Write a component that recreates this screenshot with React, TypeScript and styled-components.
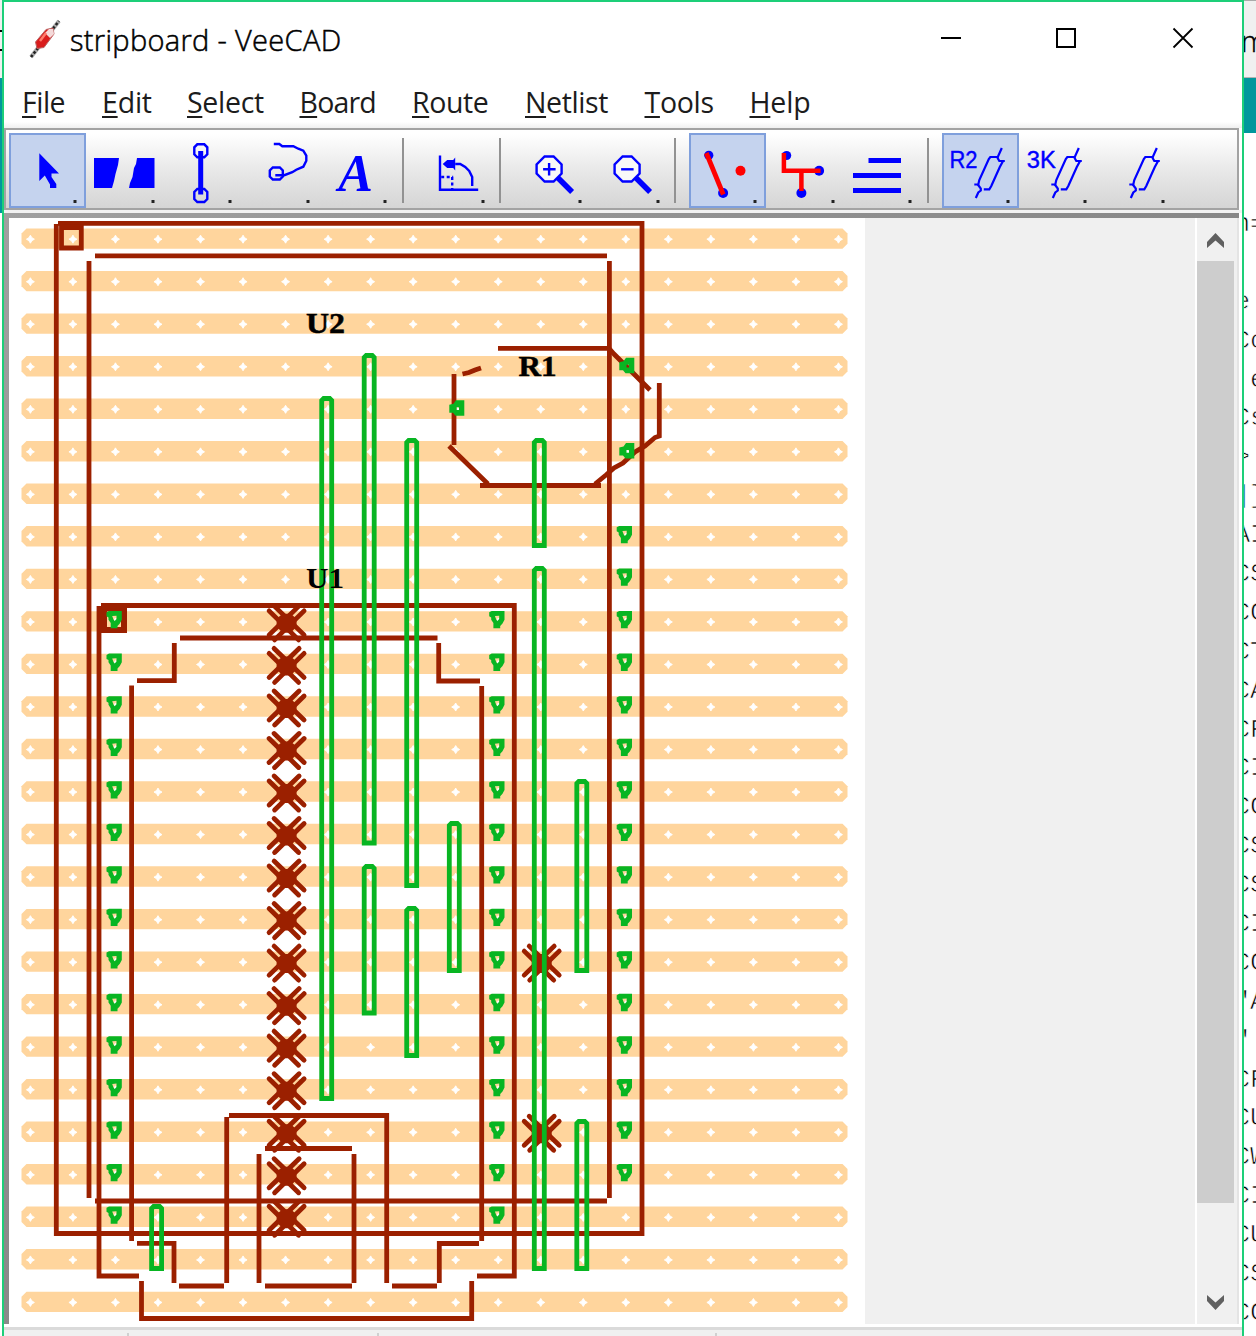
import React from 'react';
import styled, { createGlobalStyle } from 'styled-components';

const BROWN = '#9b2000';
const GREEN = '#08b522';
const PEACH = '#ffd59d';
const BLUE = '#0000ff';
const RED = '#ff0000';

const Global = createGlobalStyle`
  * { box-sizing: border-box; }
  body { margin: 0; background: #fff; }
`;

const Desktop = styled.div`
  display: flex;
  width: 1256px;
  height: 1336px;
  overflow: hidden;
  background: #fff;
`;

const LeftSliver = styled.div`
  display: flex;
  flex-direction: column;
  width: 2px;
  height: 1336px;
  overflow: hidden;
`;

const Block = styled.div<{ $h: number; $bg: string }>`
  flex: none;
  height: ${(p) => p.$h}px;
  background: ${(p) => p.$bg};
`;

const RightSliver = styled.div`
  display: flex;
  flex-direction: column;
  width: 12px;
  height: 1336px;
  overflow: hidden;
`;

const BehindTitle = styled.div`
  flex: none;
  height: 78px;
  border-top: 1px solid #aaa;
  border-bottom: 1px solid #b4b4b4;
  background: #f0f0f0;
  font: 300 29px/79px 'Open Sans', sans-serif;
  text-indent: -3px;
  color: #000;
  -webkit-text-stroke: 0.4px #000;
`;

const CodeLine = styled.div`
  flex: none;
  height: 38.9px;
  margin-left: -9.5px;
  font: 26px/38.9px 'Liberation Mono', monospace;
  white-space: pre;
  color: #000;
  -webkit-text-stroke: 0.7px #fff;
`;

const Window = styled.div`
  display: flex;
  flex-direction: column;
  flex: none;
  width: 1242px;
  height: 1336px;
  border: 2px solid #1dcf79;
  border-bottom: 0;
  background: #fff;
`;

const TitleBar = styled.div`
  display: flex;
  align-items: flex-start;
  flex: none;
  height: 78px;
  padding-left: 24px;
`;

const Title = styled.div`
  flex: 1;
  padding: 18px 0 0 7px;
  font: 300 29px/40px 'Open Sans', sans-serif;
  letter-spacing: 0.32px;
  color: #000;
  -webkit-text-stroke: 0.5px #000;
`;

const CaptionButtons = styled.div`
  display: flex;
  padding-top: 24px;
  gap: 92px;
  margin-right: 47px;
`;

const MenuBar = styled.div`
  display: flex;
  flex: none;
  height: 48px;
  padding-left: 18px;
  background: linear-gradient(#fff 42px, #f0f0f0);
`;

const MenuItem = styled.div<{ $w: number; $sp: number }>`
  flex: none;
  width: ${(p) => p.$w}px;
  font: 400 28.5px/45px 'Open Sans', sans-serif;
  letter-spacing: ${(p) => p.$sp}px;
  color: #1c1c1c;
  white-space: nowrap;
`;

const Mnemonic = styled.span`
  text-decoration: underline;
  text-decoration-thickness: 2px;
  text-underline-offset: 3px;
  text-decoration-skip-ink: none;
`;

const ToolBar = styled.div`
  display: flex;
  flex: none;
  height: 82px;
  margin-right: 3px;
  padding: 3px 0 0 3px;
  border: 2px solid #a3a3a3;
  background: linear-gradient(#fff 5%, #e9e9e9 50%, #d5d5d5);
`;

const ToolButton = styled.div<{ $on?: boolean }>`
  flex: none;
  width: 77.6px;
  height: 76px;
  & > svg {
    display: block;
    width: 77px;
    height: 75px;
    background: ${(p) => (p.$on ? '#c5d3ee' : 'transparent')};
    box-shadow: ${(p) => (p.$on ? 'inset 0 0 0 2px #7f9fdc' : 'none')};
  }
`;

const Separator = styled.div`
  flex: none;
  width: 2px;
  height: 65px;
  margin: 5px 13px 0 4.8px;
  background: #929292;
`;

const Gutter = styled.div`
  flex: none;
  height: 3px;
  background: #f2f2f2;
`;

const Work = styled.div`
  display: flex;
  flex: none;
  height: 1111px;
  margin-right: 3px;
  border-left: 5px solid #808080;
  border-top: 5px solid #808080;
  background: #f0f0f0;
  border-image: linear-gradient(135deg, #a0a0a0, #707070) 5;
  border-right: 0;
  border-bottom: 0;
`;

const Board = styled.svg`
  flex: none;
  width: 856px;
  height: 1106px;
  background: #fff;
`;

const Blank = styled.div`
  flex: 1;
  background: #f0f0f0;
  border-right: 2px solid #fff;
`;

const ScrollBar = styled.div`
  display: flex;
  flex-direction: column;
  align-items: center;
  flex: none;
  width: 42px;
  padding-right: 3px;
  background: #f0f0f0;
  border-right: 2px solid #e4e4e4;
`;

const Thumb = styled.div`
  flex: none;
  width: 37px;
  height: 942px;
  background: #cdcdcd;
`;

const ArrowBox = styled.svg`
  flex: none;
  width: 37px;
  height: 43px;
`;

const ArrowSpace = styled.div`
  flex: 1;
`;

const StatusBar = styled.div`
  display: flex;
  flex: 1;
  margin-top: 3px;
  border-top: 3px solid #dadada;
  background: #f0f0f0;
`;

const StatusCell = styled.div<{ $w: number }>`
  width: ${(p) => p.$w}px;
  margin-top: 3px;
  border-right: 2px solid #d0d0d0;
`;

const code = [
  'n=', '', 'e ', 'Cc', ' e', 'Cs', '> ', ']}', 'AI', 'CS', 'CC', 'CT', 'CA', 'CF', 'CI',
  'CC', 'CS', 'CS', 'CI', 'CC', '"A', '" ', 'CF', 'CU', 'CW', 'CI', 'CU', 'CS', 'CC',
];

const menus: [string, number, number][] = [
  ['File', 80, -0.5],
  ['Edit', 85, -0.2],
  ['Select', 112.5, -0.3],
  ['Board', 112.5, -0.8],
  ['Route', 113, -0.4],
  ['Netlist', 119.5, -0.4],
  ['Tools', 105, -0.3],
  ['Help', 80, -0.2],
];

function Tool({ x, on, children }: { x: number; on?: boolean; children: React.ReactNode }) {
  return (
    <ToolButton $on={on}>
      <svg viewBox={`${x} 133 77 75`} fill="none" stroke={BLUE} strokeWidth={2.4}>
        {children}
        <rect x={x + 64.5} y={200} width={3} height={3} fill="#222" stroke="none" />
      </svg>
    </ToolButton>
  );
}

const oct = (x: number, y: number, w: number, h: number, c: number) =>
  `M${x + c} ${y}h${w - 2 * c}l${c} ${c}v${h - 2 * c}l${-c} ${c}h${2 * c - w}l${-c} ${-c}v${2 * c - h}z`;

function Magnifier({ x, plus }: { x: number; plus?: boolean }) {
  return (
    <g>
      <path d={oct(x - 12.5, 156.5, 25, 25, 8)} fill="#f8f8f8" />
      <path d={`M${x - 6} 169.3h12.5${plus ? `M${x} 163v12.5` : ''}`} />
      <path d={`M${x + 9} 178l14 14`} strokeWidth={5.5} />
    </g>
  );
}

function Resistor({ x }: { x: number }) {
  return (
    <g transform={`translate(${x} 0)`} strokeWidth={2.2}>
      <path d="M62 148L58 157H50.5L49 159L39.5 180L38.5 184.5H34.5" />
      <path d="M57 156.5L59.5 161H65M63 161.5L60 167L51.5 186L49.5 189.3H44" />
      <path d="M38 184.5L41 188.5V190.5L38.500 192.500L36 198" />
    </g>
  );
}

const PITCH = 42.53;
const rowY = (r: number) => 238.6 + r * PITCH;
const colX = (c: number) => 30.4 + c * PITCH;
const range = (a: number, b: number) => Array.from({ length: b - a + 1 }, (_, i) => a + i);

const links: [number, number, number][] = [
  [326.7, 396, 1101], [369.2, 353, 845.5], [369.2, 864, 1015.5], [411.7, 438, 888],
  [411.7, 906, 1058], [454.3, 821, 973], [539.3, 438, 548], [539.3, 566, 1271],
  [581.8, 779, 973], [581.8, 1119, 1271], [156.6, 1204, 1271],
];

const pins: [number, number][] = [
  ...range(9, 23).map((r): [number, number] => [114.5, r]),
  ...range(9, 23).map((r): [number, number] => [497.2, r]),
  ...range(7, 22).map((r): [number, number] => [624.7, r]),
];

const cuts: [number, number][] = [
  ...range(9, 23).map((r): [number, number] => [286.6, r]),
  [541.7, 17],
  [541.7, 21],
];

const outlines = [
  'M58 223.3H642V1233.5H56.3V224',
  'M95 255.8H607M609.4 261V1198M89 261V1198M95 1201H607',
  'M101 605.5H514.3V1276H477M99 606V1276H139M141.5 1281V1318.5H471.7V1281',
  'M131.6 685.5V1241M137 680.7H174.3V643M180 638H437.5M438.7 643V681H480M481.7 686V1241',
  'M137 1243.3H174V1283M179 1286H224M226.7 1283V1117M229 1115.5H386.7V1283M392 1286H437M439.3 1283V1243.5H479',
  'M259 1283V1154M265 1148.5H352M354 1154V1283M265 1286H352',
  'M498 348.3H609L614 354L650 390M659.3 383V436L655 437.5L645 446L635 452L623 463L614 468L606 475L595 484',
  'M480 485.5H601M488 484L449 446M454 445V374M462.5 374L469 372.5L475 370L481 368',
];

const octHead = (x: number, top: number, bottom: number) =>
  `M${x - 5} ${bottom - 2.5}V${top + 4.5}l2 -2h6l2 2V${bottom - 2.5}z`;

function Drawing() {
  return (
    <Board viewBox="9 218 856 1106">
      {range(0, 25).map((r) => (
        <path key={r} fill={PEACH} d={oct(21.5, rowY(r) - 10.2, 826, 20.4, 5)} />
      ))}
      <g fill="#fff">
        {range(0, 25).flatMap((r) =>
          range(0, 19).map((c) => (
            <path
              key={`${r}-${c}`}
              d={`M${colX(c) - 4} ${rowY(r) + 0.6}l2.5 -1.5 1.5 -2.5 1.5 2.5 2.5 1.5 -2.5 1.5 -1.5 2.5 -1.5 -2.5z`}
              stroke="#fff"
              strokeWidth={0.9}
            />
          )),
        )}
      </g>
      <g fontFamily="'Liberation Serif', serif" fontWeight="700" fontSize="29" fill="#000" stroke="#000" strokeWidth="0.5">
        <text x="306" y="333" textLength="39" lengthAdjust="spacingAndGlyphs">U2</text>
        <text x="518.5" y="375.5" textLength="38" lengthAdjust="spacingAndGlyphs">R1</text>
      </g>
      <g fill="none" stroke={BROWN} strokeWidth={4.8}>
        {outlines.map((d) => (
          <path key={d} d={d} />
        ))}
        <path d="M61.5 227.5H81.3V248H61.5z" />
        <path d="M62 227H81" />
        <path d="M104 608.5H124V630H104z" strokeWidth={6} />
      </g>
      <g stroke={BROWN} strokeWidth={4.8} strokeLinecap="round">
        {cuts.map(([x, r]) => (
          <g key={`${x}-${r}`} transform={`translate(${x} ${rowY(r) + 1.5})`}>
            <path d="M-17.5 -12L12 17M-12.5 -17L17.5 12M17.5 -12L-12 17M12.5 -17L-17.5 12" />
            <path d="M-10 -4L-4 -9H4L10 -4V4L4 10H-4L-10 4Z" fill={BROWN} stroke="none" />
          </g>
        ))}
      </g>
      <g fill="none" stroke={GREEN} strokeWidth={4.8}>
        {links.map(([x, t, b]) => (
          <path key={`${x}-${t}`} d={octHead(x, t, b)} />
        ))}
      </g>
      <g fill={GREEN} fillRule="evenodd">
        {pins.map(([x, r]) => (
          <path
            key={`${x}-${r}`}
            transform={`translate(${x} ${rowY(r) + 0.7})`}
            d="M-5.5 -11H7.3V-2.3L5.3 1.5 3 4V6.3H-3.8V1L-6 -2.3V-4.5L-8 -5.7V-9.7L-5.5 -11zM-2.3 -6L-1 -2.5 .2 -1 2 -3V-6.3z"
          />
        ))}
        {[[457, 408.3], [627, 365.7], [627, 451]].map(([x, y]) => (
          <path
            key={`${x}-${y}`}
            transform={`translate(${x} ${y})`}
            d="M-7.7 -3.5L-3.5 -4.5 -1 -8H7.3V7.5H-1.5L-4 4.5H-7.7zM-.5 -1V1.8H2V-1z"
          />
        ))}
      </g>
      <text x="306" y="588" fontFamily="'Liberation Serif', serif" fontWeight="700" fontSize="29" textLength="38" lengthAdjust="spacingAndGlyphs">U1</text>
    </Board>
  );
}

export default function App() {
  return (
    <Desktop>
      <Global />
      <LeftSliver>
        <Block $h={30} $bg="#f0f0f0" />
        <Block $h={2} $bg="#000" />
        <Block $h={17} $bg="#f0f0f0" />
        <Block $h={2} $bg="#000" />
        <Block $h={27} $bg="#f0f0f0" />
        <Block $h={135} $bg="#00979c" />
      </LeftSliver>
      <Window>
        <TitleBar>
          <svg width="35" height="60" viewBox="28 2 35 60" fill="none">
            <path d="M31 57L59 21" stroke="#aaa" strokeWidth="4" />
            <path d="M31 57L59 21" stroke="#222" strokeWidth="2.5" strokeDasharray="2.5 2" />
            <path d="M35.5 42L46 29.5L53 28L54 34L44 47.5L37 48.5Z" fill="#d91c1c" stroke="#b66" strokeWidth="1" />
            <path d="M45 33L49 29L53 29L54 34L50 38Z" fill="#f4dada" />
            <path d="M40 41L46 33" stroke="#ff7b6b" strokeWidth="2.5" />
          </svg>
          <Title>stripboard - VeeCAD</Title>
          <CaptionButtons>
            <svg width="24" height="24" viewBox="0 0 24 24"><path d="M2 12h20" stroke="#000" strokeWidth="2" /></svg>
            <svg width="24" height="24" viewBox="0 0 24 24"><rect x="2" y="3" width="18" height="18" fill="none" stroke="#000" strokeWidth="2" /></svg>
            <svg width="24" height="24" viewBox="0 0 24 24"><path d="M2.5 2.5l19 19M21.5 2.5l-19 19" stroke="#000" strokeWidth="1.8" /></svg>
          </CaptionButtons>
        </TitleBar>
        <MenuBar>
          {menus.map(([label, w, sp]) => (
            <MenuItem key={label} $w={w} $sp={sp}>
              <Mnemonic>{label[0]}</Mnemonic>
              {label.slice(1)}
            </MenuItem>
          ))}
        </MenuBar>
        <ToolBar>
          <Tool x={9} on>
            <path d="M39.3 153.3V181l5.5-5.5L50 184.5V188h6.3v-4L51.5 177v-3.5H59z" fill={BLUE} stroke="none" />
          </Tool>
          <Tool x={87}>
            <path d="M94 158H119L118 165L115.5 174L114 181L112 188H94zM137 158H154.5V188H129L130 183L132.5 177L134 168L136 164z" fill={BLUE} stroke="none" />
          </Tool>
          <Tool x={165}>
            <path d={oct(195.3, 144.3, 13, 13, 3) + oct(195.3, 189, 13, 13, 3)} />
            <path d="M201.7 151v43.5" strokeWidth={5} />
          </Tool>
          <Tool x={242.2}>
            <path d="M274 144h5.5l3 2.2h11l5 2.5 5 2 3 5v5l-3 6-7 3-4 2.5-8 3h-9" />
            <path d={oct(270, 167.5, 13, 12, 3)} />
          </Tool>
          <Tool x={319.8}>
            <text x="339" y="190.5" fill={BLUE} stroke="none" fontFamily="'Liberation Serif', serif" fontStyle="italic" fontWeight="700" fontSize="52">A</text>
          </Tool>
          <Separator />
          <Tool x={417.8}>
            <path d="M440.8 155.5v34.3H479" />
            <path d="M442 177h12M453 177v12" strokeDasharray="3 2.5" />
            <path d="M443.5 164L448 160H454L456 157.5V170.5L454 168H448z" fill={BLUE} stroke="none" />
            <path d="M456 164h5l5 3 4 4 3 6v9" />
          </Tool>
          <Separator />
          <Tool x={515.2}><Magnifier x={550.3} plus /></Tool>
          <Tool x={592.8}><Magnifier x={627.9} /></Tool>
          <Separator />
          <Tool x={690.2} on>
            <circle cx={710} cy={155.3} r={4.6} fill={BLUE} stroke="none" />
            <circle cx={724.3} cy={193} r={5} fill={BLUE} stroke="none" />
            <path d="M707.5 153l17 41.5" stroke={RED} strokeWidth={4.8} />
            <circle cx={741.7} cy={170.7} r={5} fill={RED} stroke="none" />
          </Tool>
          <Tool x={767.4}>
            <g fill={BLUE} stroke="none">
              <circle cx={787} cy={155.5} r={4.6} />
              <circle cx={819.5} cy={170.7} r={5} />
              <circle cx={801.8} cy={193} r={5} />
            </g>
            <path d="M784.3 153v17.7H821M801.8 170.7V191" stroke={RED} strokeWidth={4.5} />
          </Tool>
          <Tool x={845}>
            <path d="M869.5 160.5H902M854 175.6h48M854 190.6h48" strokeWidth={5} />
          </Tool>
          <Separator />
          <Tool x={942.6} on>
            <text x="950" y="167.7" fill={BLUE} stroke={BLUE} strokeWidth={0.4} fontFamily="'Liberation Sans', sans-serif" fontSize="23.5" textLength="28" lengthAdjust="spacingAndGlyphs">R2</text>
            <Resistor x={940.4} />
          </Tool>
          <Tool x={1020.2}>
            <text x="1028" y="167.7" fill={BLUE} stroke={BLUE} strokeWidth={0.4} fontFamily="'Liberation Sans', sans-serif" fontSize="23.5" textLength="29" lengthAdjust="spacingAndGlyphs">3K</text>
            <Resistor x={1018} />
          </Tool>
          <Tool x={1097.8}>
            <Resistor x={1095.6} />
          </Tool>
        </ToolBar>
        <Gutter />
        <Work>
          <Drawing />
          <Blank />
          <ScrollBar>
            <ArrowBox viewBox="0 0 37 43"><path d="M10 30v-6L18.5 15l8.5 9v6L18.5 22.5z" fill="#606060" /></ArrowBox>
            <Thumb />
            <ArrowSpace />
            <ArrowBox viewBox="0 0 37 43"><path d="M10 14v6L18.5 29l8.5-9v-6L18.5 21.5z" fill="#606060" /></ArrowBox>
          </ScrollBar>
        </Work>
        <StatusBar>
          <StatusCell $w={125} />
          <StatusCell $w={250} />
          <StatusCell $w={338} />
        </StatusBar>
      </Window>
      <RightSliver>
        <BehindTitle>m</BehindTitle>
        <Block $h={55} $bg="#00979c" />
        <Block $h={72} $bg="#fff" />
        {code.map((line, i) => (
          <CodeLine key={i}>{line}</CodeLine>
        ))}
      </RightSliver>
    </Desktop>
  );
}
